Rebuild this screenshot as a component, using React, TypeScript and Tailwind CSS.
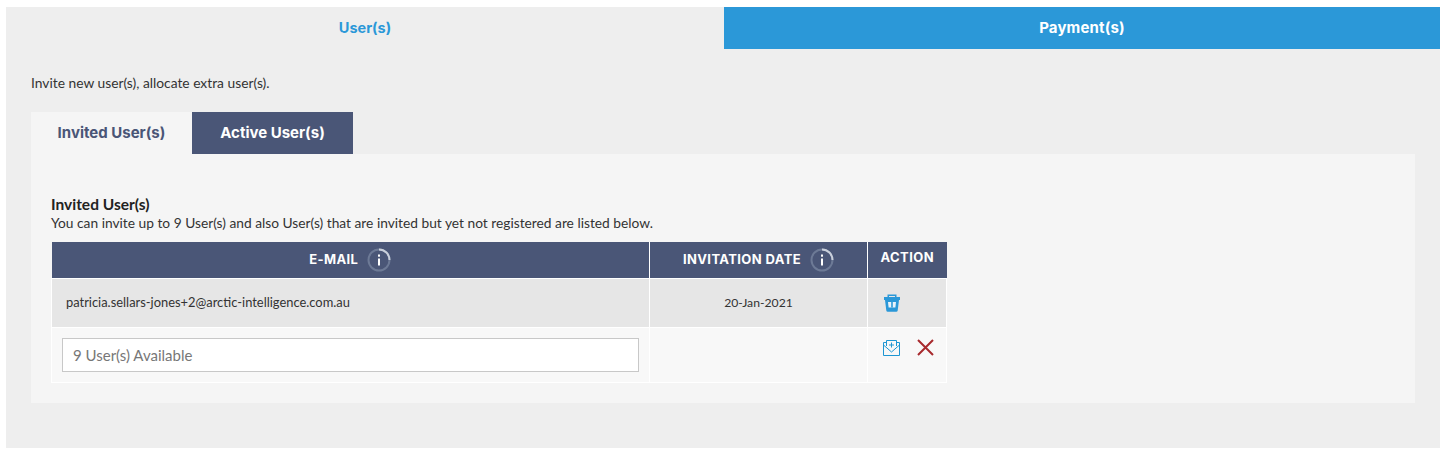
import { useState } from 'react'

const bodyFont = "font-['Lato','Noto_Sans',sans-serif]"
const headFont = "font-['Inter','Liberation_Sans',sans-serif]"

function InfoBadge() {
  return (
    <svg viewBox="0 0 24 24" aria-hidden="true" className="size-6 shrink-0">
      <circle cx="12" cy="12" r="10.5" fill="none" stroke="#6d7a96" strokeWidth="2" />
      <path d="M12 1.500a10.500 10.500 0 0 1 10.500 10.500" fill="none" stroke="#c9cfdb" strokeWidth="2" />
      <rect x="11" y="6.500" width="2" height="2.200" fill="#fff" />
      <rect x="11" y="10.500" width="2" height="7" fill="#fff" />
    </svg>
  )
}

function TrashIcon() {
  return (
    <svg viewBox="0 0 16 18" aria-hidden="true" className="h-[18px] w-4">
      <path d="M3.500 3.500V.5h9v3h-1.500V2h-6v1.500z" fill="#2b98d8" />
      <path d="M0 3h16v3h-1l-1.300 10.500a1.500 1.500 0 0 1-1.500 1.300H3.800a1.500 1.500 0 0 1-1.500-1.300L1 6H0z" fill="#2b98d8" />
      <path d="M4 8h8l-.6 5.500H4.600z" fill="#eaf3fa" />
      <path d="M7.200 8h1.600v5.500H7.200z" fill="#2b98d8" />
    </svg>
  )
}

function SaveIcon() {
  return (
    <svg viewBox="0 0 17 16" aria-hidden="true" className="h-4 w-[17px]" fill="none" stroke="#1e96d3">
      <path d="M3.500 6V.5h10V6" />
      <path d="M3.500 2.500h-3v13h16v-13h-3" />
      <path d="M.5 5l8 7 8-7" />
      <path d="M8.500 2.500v5M6 5h5" />
    </svg>
  )
}

function CloseIcon() {
  return (
    <svg viewBox="0 0 17 17" aria-hidden="true" className="size-[17px]" fill="none" stroke="#a82a2e" strokeWidth="2">
      <path d="M1 1l15 15M16 1L1 16" />
    </svg>
  )
}

export default function App() {
  const [email, setEmail] = useState('')

  return (
    <div className={`h-[454px] bg-white pt-[7px] pr-[7px] pl-[6px] text-[#333] ${bodyFont}`}>
      <div className="h-[441px] bg-[#eeeeee]">
        <div className={`flex h-[42px] font-bold ${headFont}`}>
          <div className="flex w-[718px] items-center justify-center text-[14.5px] text-[#2b98d8]">User(s)</div>
          <div className="flex flex-1 items-center justify-center bg-[#2b98d8] text-[15px] tracking-[0.01em] text-white">
            Payment(s)
          </div>
        </div>

        <div className="px-[25px]">
          <p className="mt-[24px] text-[13.8px] leading-[20px]">Invite new user(s), allocate extra user(s).</p>

          <div className={`mt-[19px] flex h-[42px] text-[15px] font-bold ${headFont}`}>
            <div className="flex w-[161px] items-center justify-center bg-[#f5f5f5] text-[#4a5677]">Invited User(s)</div>
            <div className="flex w-[161px] items-center justify-center bg-[#4a5677] text-white">Active User(s)</div>
          </div>

          <div className="h-[249px] bg-[#f5f5f5] px-5 pt-[41px]">
            <h2 className="text-[15.5px] leading-[19px] font-bold text-[#222]">Invited User(s)</h2>
            <p className="text-[13.75px] leading-[18px]">
              You can invite up to 9 User(s) and also User(s) that are invited but yet not registered are listed below.
            </p>

            <table className="mt-[10px] w-[895px] table-fixed border-collapse text-[12.9px]">
              <colgroup>
                <col className="w-[598px]" />
                <col className="w-[218px]" />
                <col className="w-[79px]" />
              </colgroup>
              <thead>
                <tr className={`h-[36px] bg-[#4a5677] text-[13px] font-bold tracking-[0.03em] text-white ${headFont}`}>
                  <th className="border-r border-b border-white">
                    <span className="inline-flex items-center gap-[9px]">
                      E-MAIL
                      <InfoBadge />
                    </span>
                  </th>
                  <th className="border-r border-b border-white">
                    <span className="inline-flex items-center gap-[9px]">
                      INVITATION DATE
                      <InfoBadge />
                    </span>
                  </th>
                  <th className="border-b border-white pb-1">ACTION</th>
                </tr>
              </thead>
              <tbody>
                <tr className="h-[49px] bg-[#e6e6e6]">
                  <td className="border border-t-0 border-white pl-[14px]">patricia.sellars-jones+2@arctic-intelligence.com.au</td>
                  <td className="border border-t-0 border-white pt-0.5 text-center text-[12.2px]">20-Jan-2021</td>
                  <td className="border border-t-0 border-white pl-4">
                    <TrashIcon />
                  </td>
                </tr>
                <tr className="h-[55px] bg-[#f8f8f8]">
                  <td className="border border-white px-2.5">
                    <input
                      value={email}
                      onChange={(event) => setEmail(event.target.value)}
                      placeholder="9 User(s) Available"
                      className="block h-[34px] w-full border border-[#c8c8c8] bg-white px-2.5 text-[15px] text-[#333] placeholder:text-[#777] focus:outline-none"
                    />
                  </td>
                  <td className="border border-white" />
                  <td className="border border-white pb-[14px] pl-[15px]">
                    <div className="flex items-center gap-[17px]">
                      <SaveIcon />
                      <CloseIcon />
                    </div>
                  </td>
                </tr>
              </tbody>
            </table>
          </div>
        </div>
      </div>
    </div>
  )
}
